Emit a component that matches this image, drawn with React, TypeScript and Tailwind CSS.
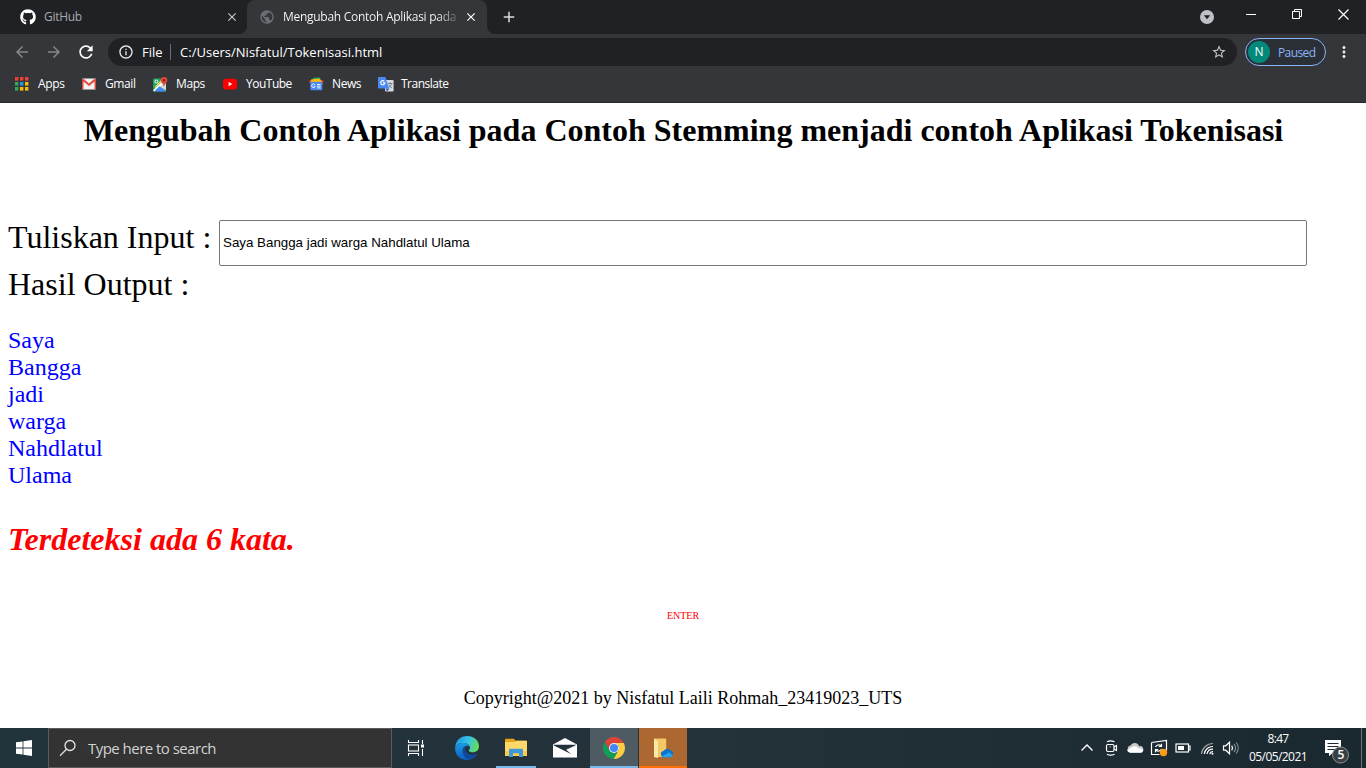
import type { ReactNode } from "react";
import { FaGithub } from "react-icons/fa";
import {
  MdAdd,
  MdArrowBack,
  MdArrowForward,
  MdClose,
  MdInfoOutline,
  MdMoreVert,
  MdPublic,
  MdRefresh,
  MdStarBorder,
} from "react-icons/md";

const words = ["Saya", "Bangga", "jadi", "warga", "Nahdlatul", "Ulama"];

function AppsIcon() {
  const colors = ["#ea4335", "#ea4335", "#ea4335", "#34a853", "#2196f3", "#fbbc04", "#34a853", "#fbbc04", "#fbbc04"];
  return (
    <svg width="14" height="14" viewBox="0 0 14 14">
      {colors.map((c, i) => (
        <rect key={i} x={(i % 3) * 5} y={Math.floor(i / 3) * 5} width="3.4" height="3.6" fill={c} />
      ))}
    </svg>
  );
}

function GmailIcon() {
  return (
    <svg width="14" height="14" viewBox="0 0 14 14">
      <rect y="1.5" width="14" height="11" rx="1" fill="#f2f2f2" />
      <path d="M0 12V2.600L1.200 1.500 7 6.400l5.800-4.900L14 2.600V12l-.5.500h-1V4.500L7 8.900 1.500 4.500v8h-1z" fill="#dd4b3e" />
    </svg>
  );
}

function MapsIcon() {
  return (
    <svg width="15" height="15" viewBox="0 0 15 15">
      <rect y="1.500" width="13" height="13" rx="1" fill="#1fa463" />
      <path d="M1 14.500 7 8.500l6 6z" fill="#4a89f3" />
      <path d="M0 13.500 11 2.500l2 2-5.500 5.500-1.200-.8L1.200 14.500z" fill="#fff" />
      <path d="M7.600 10 13 4.800v8.700z" fill="#dadada" />
      <path d="M2 10.500 9 3" stroke="#ffd84c" strokeWidth="1.200" />
      <circle cx="3.400" cy="4.500" r="1.500" fill="none" stroke="#fff" />
      <path d="M11 0a3.300 3.300 0 0 1 3.300 3.300C14.300 5.800 11.600 6.500 11 10c-.6-3.500-3.300-4.200-3.300-6.700A3.300 3.300 0 0 1 11 0z" fill="#e1463a" />
      <circle cx="11" cy="3.300" r="1.200" fill="#7b231e" />
    </svg>
  );
}

function YouTubeIcon() {
  return (
    <svg width="14" height="14" viewBox="0 0 14 14">
      <rect y="1.800" width="14" height="10.600" rx="2.600" fill="#f00" />
      <path d="M5.600 4.900v4.400L9.400 7.100z" fill="#fff" />
    </svg>
  );
}

function NewsIcon() {
  return (
    <svg width="15" height="14" viewBox="0 0 15 14">
      <path d="M4 .8 11 .5l1.500 5H3z" fill="#1fa463" />
      <path d="m0 4 3-1.500L5 8H1.500z" fill="#e8453c" />
      <path d="m14.500 3.800-5-1.500L8 8h5.500z" fill="#e8453c" />
      <path d="m2 2.500 8-1L12.500 4v3H2z" fill="#fbbc04" />
      <rect x="1.300" y="4.800" width="12" height="8.500" rx="1" fill="#4a89f3" />
      <path d="M6 7.800a1.800 1.800 0 1 0 .2 1.500H4.800M8 7.500h3.500M8 9.200h3.800M8 10.900h3.500" stroke="#fff" strokeWidth=".9" fill="none" />
    </svg>
  );
}

function TranslateIcon() {
  return (
    <svg width="16" height="15" viewBox="0 0 16 15">
      <rect x="7" y="3" width="8.600" height="11.500" rx="1" fill="#d8dade" />
      <path d="M9.500 6.500h5M12 5.300v1.200m1.500 0c-.5 2-1.800 3.400-3.500 4.500m.8-3c.7 1.300 1.700 2.300 3.200 3" stroke="#5f7f96" strokeWidth=".9" fill="none" />
      <path d="m7.500 11.500 4 0-2.500 3z" fill="#3563b8" />
      <path d="M1 0h6.500l3.500 11.500H1a1 1 0 0 1-1-1V1a1 1 0 0 1 1-1z" fill="#4a89f3" />
      <path d="M6.300 4.200a2.100 2.100 0 1 0 .6 1.700H4.900" stroke="#fff" strokeWidth="1.100" fill="none" />
    </svg>
  );
}

function WindowsIcon() {
  return (
    <svg width="16" height="16" viewBox="0 0 16 16" fill="#fff">
      <path d="M0 2.300 6.600 1.400v6.200H0zM7.400 1.300 16 0v7.600H7.400zM0 8.400h6.600v6.200L0 13.700zM7.400 8.400H16V16l-8.600-1.300z" />
    </svg>
  );
}

function SearchIcon() {
  return (
    <svg width="18" height="18" viewBox="0 0 18 18" fill="none" stroke="#e4e4e4" strokeWidth="1.300">
      <circle cx="11" cy="6.500" r="5" />
      <path d="M7.500 10.200 1 16.700" />
    </svg>
  );
}

function TaskViewIcon() {
  return (
    <svg width="18" height="16" viewBox="0 0 18 16" fill="none" stroke="#fff" strokeWidth="1.100">
      <path d="M1.500 0v2.500h10V0M1.500 16v-2.500h10V16M15.500 0v4M15.500 9v7" />
      <rect x="1.500" y="5" width="10" height="6" />
      <rect x="14" y="4.500" width="3" height="3" fill="#fff" stroke="none" />
    </svg>
  );
}

function EdgeIcon() {
  return (
    <svg width="24" height="24" viewBox="0 0 24 24">
      <defs>
        <linearGradient id="edgeTop" x1="0" y1=".4" x2="1" y2=".6">
          <stop offset="0" stopColor="#1b9de2" />
          <stop offset=".5" stopColor="#35c1e8" />
          <stop offset="1" stopColor="#6be04c" />
        </linearGradient>
        <linearGradient id="edgeLeft" x1="0" y1="0" x2="0" y2="1">
          <stop offset="0" stopColor="#1b9de2" />
          <stop offset="1" stopColor="#0b5cc0" />
        </linearGradient>
      </defs>
      <path d="M.2 10.800C.8 4.500 5.600 0 12 0c7 0 12 4.700 12 10.300 0 3.800-2.700 6-6 6-2.700 0-4.300-1-4.300-1.800 0-.7 1.300-1.200 1.300-3C15 8.800 12 7 8.300 7 4.500 7 1.500 8.700.2 10.800z" fill="url(#edgeTop)" />
      <path d="M.1 11.500C1 8.500 4.500 7 8 7c4 0 6.800 2 6.900 4.300-.7-1-1.900-1.500-3-1.500-2.400 0-4 2.600-4 5.200 0 4 3 7.400 7.300 8.500-6.800 2.200-15.600-2.200-15.100-12z" fill="url(#edgeLeft)" />
      <path d="M9.500 10.500C7.300 12 6.800 15 8 18c1.400 3.500 4.300 5.500 7.200 5.500 3-.8 5.500-2.700 6.900-5.100.3-.5-.2-.8-.6-.6-4.800 2.100-11.300.4-11.300-4.800 0-.9.300-1.900 1-2.800z" fill="#104a9c" />
    </svg>
  );
}

function ExplorerIcon() {
  return (
    <svg width="22" height="20" viewBox="0 0 22 20">
      <path d="M0 1.500A.8.800 0 0 1 .8.700H9l1.500 2H22V5H0z" fill="#e8a317" />
      <path d="M0 4h9.500L11 2.700h10.200a.8.800 0 0 1 .8.800V18H0z" fill="#ffd869" />
      <path d="M0 13h22v5H0z" fill="#fbc94c" />
      <path d="M4 19v-7.200a1 1 0 0 1 1-1h12a1 1 0 0 1 1 1V19h-4v-3.800H8V19z" fill="#3d98d9" />
    </svg>
  );
}

function MailIcon() {
  return (
    <svg width="24" height="20" viewBox="0 0 24 20">
      <path d="M0 6.500 12 0l12 6.500v13H0z" fill="#fff" />
      <path d="M.8 6.700 23.200 6.700 12.800 11.500l5.700 4.800L.8 7.500z" fill="#22303a" />
      <path d="m22.500 7.200-9.700 4.500" stroke="#22303a" strokeWidth=".6" />
    </svg>
  );
}

function ChromeIcon() {
  return (
    <svg width="22" height="22" viewBox="0 0 48 48">
      <path d="M3.810 11.030A24 24 0 0 1 45.330 13H24A11 11 0 0 0 14.470 29.500z" fill="#db4437" />
      <path d="M45.330 13A24 24 0 0 1 22.860 47.970L33.530 29.500A11 11 0 0 0 24 13z" fill="#ffcd40" />
      <path d="M22.860 47.970A24 24 0 0 1 3.810 11.030L14.470 29.500A11 11 0 0 0 33.530 29.500z" fill="#0f9d58" />
      <circle cx="24" cy="24" r="11" fill="#f1f1f1" />
      <circle cx="24" cy="24" r="8.800" fill="#4285f4" />
    </svg>
  );
}

function FolderCloudIcon() {
  return (
    <svg width="20" height="20" viewBox="0 0 20 20">
      <path d="M0 .5h11.500a.7.700 0 0 1 .7.700V19H0z" fill="#f2c866" />
      <path d="m0 .5 4 3V20l-4-1z" fill="#ffe7a0" />
      <path d="M9.700 19.300a3.200 3.200 0 0 1-.4-6.300 4.600 4.600 0 0 1 6.800-1.100 3.800 3.800 0 0 1 .2 7.400z" fill="#0f73c9" />
      <path d="M7.600 18.300 15.500 14.200l3.600 3.600a3.700 3.700 0 0 1-2.300 1.500H9.700a3.200 3.200 0 0 1-2.100-1z" fill="#28a0ea" />
    </svg>
  );
}

function NotificationIcon() {
  return (
    <svg width="26" height="26" viewBox="0 0 26 26">
      <path d="M1 1h16v13H8.500L5 17.200V14H1z" fill="#fff" />
      <path d="M3.500 4.500h11M3.500 7.500h11M3.500 10.500h8" stroke="#1d2b32" strokeWidth="1.100" />
      <circle cx="16.500" cy="16" r="8" fill="#3a4042" stroke="#8b9092" strokeWidth="1" />
    </svg>
  );
}

function TrayIcon({ className, children }: { className: string; children: ReactNode }) {
  return (
    <div className={`flex shrink-0 items-center justify-center ${className}`}>
      <svg width="20" height="18" viewBox="0 0 20 18" fill="none" stroke="#fff" strokeWidth="1.200">
        {children}
      </svg>
    </div>
  );
}

function Bookmark({ icon, label, className }: { icon: ReactNode; label: string; className: string }) {
  return (
    <div className={`flex shrink-0 items-center ${className}`}>
      <span className="flex w-[23px] shrink-0">{icon}</span>
      <span className="whitespace-nowrap">{label}</span>
    </div>
  );
}

function TabStrip() {
  return (
    <div className="flex h-[34px] bg-[#202124] text-xs">
      <div className="flex w-[247px] items-center pl-5">
        <FaGithub className="size-4 text-white" />
        <span className="ml-2 grow tracking-[-0.3px] text-[#a5aaaf]">GitHub</span>
        <MdClose className="mr-2 size-3.5 text-[#c4c7ca]" />
      </div>
      <div className="relative flex w-[240px] items-center rounded-t-lg bg-[#35363a] pl-3">
        <svg className="absolute bottom-0 -left-2" width="8" height="8">
          <path d="M8 0v8H0a8 8 0 0 0 8-8z" fill="#35363a" />
        </svg>
        <svg className="absolute -right-2 bottom-0" width="8" height="8">
          <path d="M0 0v8h8a8 8 0 0 1-8-8z" fill="#35363a" />
        </svg>
        <MdPublic className="size-4 shrink-0 text-[#6b6f73]" />
        <span className="ml-2 w-[174px] overflow-hidden bg-linear-to-r from-white from-88% to-white/20 bg-clip-text tracking-[-0.28px] whitespace-nowrap text-transparent">
          Mengubah Contoh Aplikasi pada
        </span>
        <MdClose className="ml-[7px] size-3.5 shrink-0 text-white" />
      </div>
      <MdAdd className="mt-2 ml-[13px] size-[18px] text-[#dadce0]" />
      <div className="ml-auto flex">
        <svg className="mt-[10px] mr-8" width="14" height="14" viewBox="0 0 14 14">
          <circle cx="7" cy="7" r="7" fill="#bdc1c6" />
          <path d="M3.800 5.300h6.400L7 9.300z" fill="#202124" />
        </svg>
        <svg className="mt-2 mr-9" width="10" height="12">
          <path d="M0 6.500h10" stroke="#fff" />
        </svg>
        <svg className="mt-2 mr-9" width="10" height="12" fill="none" stroke="#fff">
          <path d="M.5 3.500h7v7h-7zM2.500 3.500v-2h7v7h-2" />
        </svg>
        <svg className="mt-2 mr-[17px]" width="11" height="12" fill="none" stroke="#fff" strokeWidth="1.200">
          <path d="m.5 1.500 10 10m0-10-10 10" />
        </svg>
      </div>
    </div>
  );
}

function Toolbar() {
  return (
    <div className="flex h-9 items-center bg-[#35363a] pl-[13px] text-[13px] text-white">
      <MdArrowBack className="size-[18px] text-[#85878a]" />
      <MdArrowForward className="ml-3.5 size-[18px] text-[#85878a]" />
      <MdRefresh className="ml-[13px] size-5 text-white" />
      <div className="ml-3 flex h-7 w-[1129px] items-center rounded-full bg-[#202124] pl-2.5">
        <MdInfoOutline className="size-4 text-[#e8eaed]" />
        <span className="ml-2 w-[28px] pt-px">File</span>
        <span className="h-4 w-px bg-[#6b6e72]" />
        <span className="ml-[9px] pt-px tracking-[0.02px]">C:/Users/Nisfatul/Tokenisasi.html</span>
        <MdStarBorder className="mr-2.5 ml-auto size-4 text-[#c6c9cc]" />
      </div>
      <div className="ml-2 flex h-7 w-[81px] items-center rounded-full border border-[#8ab4f8] bg-[#2b2f36] pl-0.5">
        <span className="flex size-[22px] items-center justify-center rounded-full bg-[#00897b] text-xs font-medium">N</span>
        <span className="ml-2 pt-px text-xs tracking-[-0.6px] text-[#8ab4f8]">Paused</span>
      </div>
      <MdMoreVert className="ml-[9px] size-[18px] text-[#e8eaed]" />
    </div>
  );
}

function BookmarksBar() {
  return (
    <div className="flex h-[33px] items-center border-b border-[#28292b] bg-[#35363a] pb-1 pl-[15px] text-xs text-white">
      <Bookmark className="w-[67px] tracking-[-0.3px]" icon={<AppsIcon />} label="Apps" />
      <Bookmark className="w-[71px] tracking-[-0.4px]" icon={<GmailIcon />} label="Gmail" />
      <Bookmark className="w-[70px] tracking-[-0.4px]" icon={<MapsIcon />} label="Maps" />
      <Bookmark className="w-[86px] tracking-[-0.5px]" icon={<YouTubeIcon />} label="YouTube" />
      <Bookmark className="w-[69px] tracking-[-0.4px]" icon={<NewsIcon />} label="News" />
      <Bookmark className="tracking-[-0.5px]" icon={<TranslateIcon />} label="Translate" />
    </div>
  );
}

function Page() {
  return (
    <main className="h-[625px] overflow-hidden bg-white px-2 pt-2 font-['Liberation_Serif',serif] text-black">
      <h1 className="pl-px text-center text-[32px] leading-[38px] font-bold whitespace-nowrap">
        Mengubah Contoh Aplikasi pada Contoh Stemming menjadi contoh Aplikasi Tokenisasi
      </h1>
      <div className="mt-[69px] flex h-12 text-[32px] leading-[38px]">
        <label htmlFor="kalimat" className="w-[211px] whitespace-nowrap">Tuliskan Input :</label>
        <input
          id="kalimat"
          className="mt-0.5 h-[46px] w-[1088px] rounded-[2px] border border-[#767676] px-[3px] pb-0.5 font-['Liberation_Sans',sans-serif] text-[13.333px] outline-none"
          defaultValue="Saya Bangga jadi warga Nahdlatul Ulama"
        />
      </div>
      <p className="text-[32px] leading-[37px]">Hasil Output :</p>
      <ul className="mt-6 text-2xl leading-[27px] text-[#0000ff]">
        {words.map((word) => (
          <li key={word}>{word}</li>
        ))}
      </ul>
      <p className="mt-8 text-[32px] leading-[37px] font-bold text-[#ff0000] italic">Terdeteksi ada 6 kata.</p>
      <p className="mt-[52px] text-center text-[10px] leading-3 text-[#ff0000]">ENTER</p>
      <p className="mt-[66px] text-center text-lg leading-[21px]">Copyright@2021 by Nisfatul Laili Rohmah_23419023_UTS</p>
    </main>
  );
}

function Taskbar() {
  return (
    <footer className="flex h-10 bg-linear-to-r from-[#21343c] via-[#24323a] to-[#1a282f] text-white">
      <div className="flex w-12 items-center justify-center">
        <WindowsIcon />
      </div>
      <div className="flex w-[344px] items-center border border-[#5c5c5c] bg-[#333333] pl-2.5">
        <SearchIcon />
        <span className="ml-[11px] text-[15px] tracking-[-0.53px] text-[#d2d2d2]">Type here to search</span>
      </div>
      <div className="flex w-12 items-center justify-center">
        <TaskViewIcon />
      </div>
      <div className="flex w-[54px] items-center justify-center">
        <EdgeIcon />
      </div>
      <div className="mx-0.5 flex w-10 items-center justify-center border-b-2 border-[#76b9ed] pt-0.5">
        <ExplorerIcon />
      </div>
      <div className="ml-[3px] flex w-12 items-center justify-center">
        <MailIcon />
      </div>
      <div className="ml-px flex w-12 items-center justify-center border-b-2 border-[#76b9ed] bg-[#4f5b62] pt-0.5">
        <ChromeIcon />
      </div>
      <div className="ml-px flex w-12 items-center justify-center border-b-2 border-[#ff6f00] bg-[#ac6830] pt-0.5 pl-px">
        <FolderCloudIcon />
      </div>
      <div className="ml-auto flex">
        <TrayIcon className="w-6">
          <path d="m4.500 11.500 5.500-5.500 5.500 5.500" strokeWidth="1.400" />
        </TrayIcon>
        <TrayIcon className="w-6">
          <rect x="5.500" y="5.500" width="7.500" height="7" rx="1.500" />
          <path d="m13 8 2.500-1.500v5L13 10M6 2.800q3.500-2 7.500 0M6 15.200q3.500 2 7.500 0" />
          <circle cx="9.200" cy="7.800" r=".6" fill="#fff" stroke="none" />
        </TrayIcon>
        <TrayIcon className="w-6">
          <path d="M6 13.500a3.500 3.500 0 0 1-.6-6.900 4.800 4.800 0 0 1 8.800.6 3.200 3.200 0 0 1 1.800 6.300z" fill="#c9cbcc" stroke="none" />
          <path d="M5 13.700q-2.500-.3-3-2.700l6-3.500q3-1 5 1.500 4 0 5 2.800-.6 1.900-2 1.900z" fill="#fff" stroke="none" />
        </TrayIcon>
        <TrayIcon className="w-6">
          <path d="M2.500 3.500 17.500 1.500v10M2.500 3.500v12h8" />
          <path d="M6.500 8a3.300 3.300 0 0 1 5.500-1M12.500 4.800v2.700H9.800M12.500 10A3.300 3.300 0 0 1 7 11M6.500 13.200v-2.700h2.700" />
          <circle cx="14.500" cy="13.500" r="3.700" fill="#ff9a16" stroke="none" />
        </TrayIcon>
        <TrayIcon className="w-6">
          <rect x="3" y="5" width="12.500" height="8" />
          <path d="M5 7h6v4H5z" fill="#fff" stroke="none" />
          <path d="M15.500 7h1.500v4h-1.500" />
        </TrayIcon>
        <TrayIcon className="w-6">
          <path d="M4.500 15A11.500 11.500 0 0 1 16 4.500" stroke="#9ba2a6" />
          <path d="M7.300 15A8.500 8.500 0 0 1 16 7.500M10 15a6 6 0 0 1 6-4.800M12.700 15a3.200 3.200 0 0 1 3.300-2.300" />
          <circle cx="15.500" cy="14.800" r="1" fill="#fff" stroke="none" />
        </TrayIcon>
        <TrayIcon className="w-6">
          <path d="M2.500 6.800h2.300l3.700-3.600v11.600l-3.700-3.600H2.500z" />
          <path d="M10.700 6.700a4 4 0 0 1 0 4.600" />
          <path d="M13 5a6.500 6.500 0 0 1 0 8M15.300 3.500a9 9 0 0 1 0 11" stroke="#829096" />
        </TrayIcon>
        <div className="ml-1 flex w-[62px] flex-col items-center pt-0.5 text-xs leading-[18px]">
          <span className="tracking-[-0.65px]">8:47</span>
          <span className="tracking-[-0.57px]">05/05/2021</span>
        </div>
        <div className="relative ml-[15px] w-[37px] pt-[11px]">
          <NotificationIcon />
          <span className="absolute top-[18px] left-[9px] w-4 text-center text-xs leading-[18px] font-semibold">5</span>
        </div>
        <div className="mr-1 w-px bg-[#6d777c]" />
      </div>
    </footer>
  );
}

export default function App() {
  return (
    <div className="flex h-[768px] w-[1366px] flex-col overflow-hidden font-['Open_Sans','Noto_Sans',sans-serif]">
      <TabStrip />
      <Toolbar />
      <BookmarksBar />
      <Page />
      <Taskbar />
    </div>
  );
}
